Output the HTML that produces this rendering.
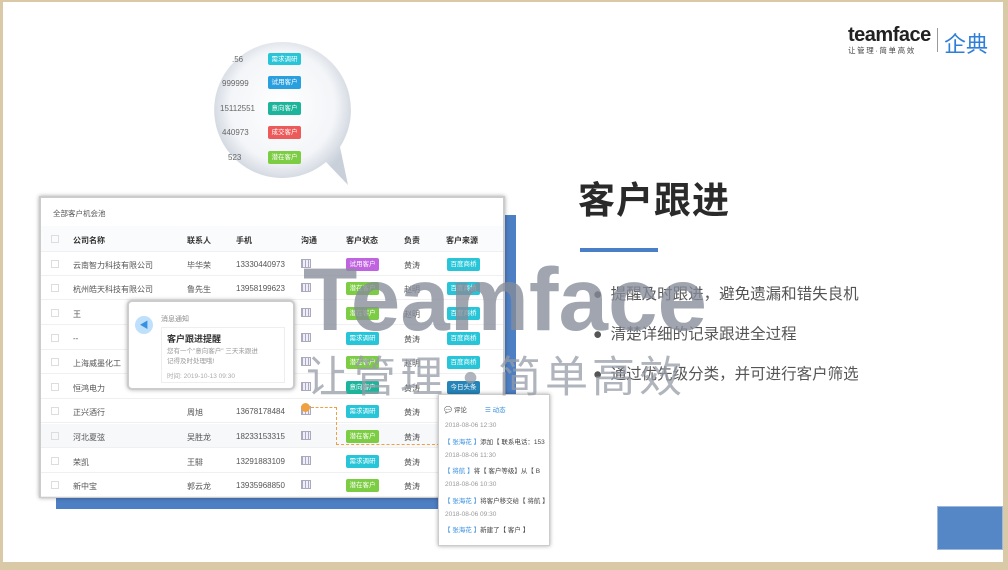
<!DOCTYPE html>
<html><head><meta charset="utf-8"><style>
*{margin:0;padding:0;box-sizing:border-box}
body{width:1008px;height:570px;background:#d9c9a6;position:relative;overflow:hidden;font-family:"Liberation Sans","Noto Sans CJK SC",sans-serif}
#pg{position:absolute;left:3px;top:2px;width:1000px;height:560px;background:#fff;overflow:hidden}
.abs{position:absolute}
.tb{position:absolute;left:36px;top:194px;width:466px;height:302px;background:#fff;border:2px solid #ccc;box-shadow:0 0 4px rgba(0,0,0,.35)}
.row{position:absolute;left:0;width:462px;height:24px;border-bottom:1px solid #f0f0f0;font-size:8px;color:#555}
.row span{position:absolute;top:8px;white-space:nowrap}
.tag{position:absolute;top:6px;width:33px;height:13px;border-radius:2px;color:#fff;font-size:6.5px;line-height:13px;text-align:center}
.cb{position:absolute;left:10px;top:8px;width:8px;height:8px;border:1px solid #ddd}
.gi{position:absolute;left:260px;top:7px;width:10px;height:9px;border:1px solid #aab;background:repeating-linear-gradient(90deg,#aab 0 1px,#eef 1px 3px)}
.pu{background:#c063e0}.gr{background:#7ccd43}.cy{background:#28c5d8}.tl{background:#1cb49a}.db{background:#2685b8}
</style></head><body><div id="pg">
<div class="abs" style="left:845px;top:22px;font-size:20px;font-weight:bold;color:#222;letter-spacing:-0.5px">teamface</div>
<div class="abs" style="left:845px;top:43px;font-size:7.5px;color:#444;letter-spacing:1.6px">让管理·简单高效</div>
<div class="abs" style="left:934px;top:26px;width:1px;height:24px;background:#999"></div>
<div class="abs" style="left:941px;top:25px;font-size:22px;color:#2f7fd8">企典</div>

<svg class="abs" style="left:205px;top:35px" width="150" height="150">
<defs><radialGradient id="rg" cx="50%" cy="45%" r="55%"><stop offset="0" stop-color="#fff"/><stop offset=".7" stop-color="#f3f5f8"/><stop offset="1" stop-color="#c9d0da"/></radialGradient></defs>
<path d="M75 5 A68 68 0 1 0 118 125 L140 148 L132 110 A68 68 0 0 0 75 5Z" fill="url(#rg)"/>
</svg>
<div class="abs" style="left:213px;top:48px;width:130px;font-size:8px;color:#666">
<div class="abs" style="left:16px;top:5px">.56</div><div class="abs tag cy" style="left:52px;top:3px;height:12px">需求调研</div>
<div class="abs" style="left:6px;top:29px">999999</div><div class="abs tag" style="left:52px;top:26px;background:#2a9fe0">试用客户</div>
<div class="abs" style="left:4px;top:54px">15112551</div><div class="abs tag tl" style="left:52px;top:52px">意向客户</div>
<div class="abs" style="left:6px;top:78px">440973</div><div class="abs tag" style="left:52px;top:76px;background:#ec5a5a">成交客户</div>
<div class="abs" style="left:12px;top:103px">523</div><div class="abs tag gr" style="left:52px;top:101px">潜在客户</div>
</div>

<div class="abs" style="left:53px;top:213px;width:460px;height:294px;background:#4d7fc4"></div>
<div class="tb">
<div class="abs" style="left:12px;top:10px;font-size:7.5px;color:#555">全部客户机会池</div>
<div class="row" style="top:28px;height:26px;background:#fafbfc;font-weight:bold;color:#333"><div class="cb" style="top:9px"></div><span style="left:32px;top:9px">公司名称</span><span style="left:146px;top:9px">联系人</span><span style="left:195px;top:9px">手机</span><span style="left:260px;top:9px">沟通</span><span style="left:305px;top:9px">客户状态</span><span style="left:363px;top:9px">负责</span><span style="left:405px;top:9px">客户来源</span></div>
<div class="row" style="top:54px"><div class="cb"></div><span style="left:32px">云南智力科技有限公司</span><span style="left:146px">毕华荣</span><span style="left:195px">13330440973</span><div class="gi"></div><div class="tag pu" style="left:305px">试用客户</div><span style="left:363px">黄涛</span><div class="tag cy" style="left:406px">百度商桥</div></div>
<div class="row" style="top:78px"><div class="cb"></div><span style="left:32px">杭州皓天科技有限公司</span><span style="left:146px">鲁先生</span><span style="left:195px">13958199623</span><div class="gi"></div><div class="tag gr" style="left:305px">潜在客户</div><span style="left:363px">赵明</span><div class="tag cy" style="left:406px">百度商桥</div></div>
<div class="row" style="top:103px"><div class="cb"></div><span style="left:32px">王</span><div class="gi"></div><div class="tag gr" style="left:305px">潜在客户</div><span style="left:363px">赵明</span><div class="tag cy" style="left:406px">百度商桥</div></div>
<div class="row" style="top:128px"><div class="cb"></div><span style="left:32px">--</span><div class="gi"></div><div class="tag cy" style="left:305px">需求调研</div><span style="left:363px">黄涛</span><div class="tag cy" style="left:406px">百度商桥</div></div>
<div class="row" style="top:152px"><div class="cb"></div><span style="left:32px">上海威墨化工</span><div class="gi"></div><div class="tag gr" style="left:305px">潜在客户</div><span style="left:363px">赵明</span><div class="tag cy" style="left:406px">百度商桥</div></div>
<div class="row" style="top:177px"><div class="cb"></div><span style="left:32px">恒鸿电力</span><div class="gi"></div><div class="tag tl" style="left:305px">意向客户</div><span style="left:363px">黄涛</span><div class="tag db" style="left:406px">今日头条</div></div>
<div class="row" style="top:201px"><div class="cb"></div><span style="left:32px">正兴酒行</span><span style="left:146px">周旭</span><span style="left:195px">13678178484</span><div class="gi"></div><div class="tag cy" style="left:305px">需求调研</div><span style="left:363px">黄涛</span></div>
<div class="row" style="top:226px;background:#f7f8fa"><div class="cb"></div><span style="left:32px">河北夏弦</span><span style="left:146px">吴胜龙</span><span style="left:195px">18233153315</span><div class="gi"></div><div class="tag gr" style="left:305px">潜在客户</div><span style="left:363px">黄涛</span></div>
<div class="row" style="top:251px"><div class="cb"></div><span style="left:32px">荣凯</span><span style="left:146px">王騑</span><span style="left:195px">13291883109</span><div class="gi"></div><div class="tag cy" style="left:305px">需求调研</div><span style="left:363px">黄涛</span></div>
<div class="row" style="top:275px"><div class="cb"></div><span style="left:32px">新中宝</span><span style="left:146px">郭云龙</span><span style="left:195px">13935968850</span><div class="gi"></div><div class="tag gr" style="left:305px">潜在客户</div><span style="left:363px">黄涛</span></div>
</div>
<div class="abs" style="left:298px;top:401px;width:9px;height:9px;border-radius:50%;background:#f0a040"></div>
<div class="abs" style="left:308px;top:405px;width:26px;border-top:1.5px dashed #f0a040"></div>
<div class="abs" style="left:333px;top:405px;height:38px;border-left:1.5px dashed #f0a040"></div>
<div class="abs" style="left:333px;top:442px;width:104px;border-top:1.5px dashed #f0a040"></div>

<div class="abs" style="left:124px;top:298px;width:168px;height:90px;background:#fff;border:2px solid #ccc;border-radius:5px;box-shadow:0 0 4px rgba(0,0,0,.3)">
<div class="abs" style="left:6px;top:14px;width:18px;height:18px;border-radius:50%;background:#bfe0fb;color:#3a90e0;font-size:9px;text-align:center;line-height:18px">◀</div>
<div class="abs" style="left:32px;top:12px;font-size:7px;color:#888">消息通知</div>
<div class="abs" style="left:32px;top:25px;width:124px;height:56px;border:1px solid #eee">
<div class="abs" style="left:5px;top:4px;font-size:9px;color:#333;font-weight:bold">客户跟进提醒</div>
<div class="abs" style="left:5px;top:19px;font-size:6.5px;color:#999;line-height:10px;width:120px">您有一个"意向客户" 三天未跟进<br>记得及时处理哦!</div>
<div class="abs" style="left:5px;top:42px;font-size:6.5px;color:#aaa">时间: 2019-10-13 09:30</div>
</div></div>

<div class="abs" style="left:435px;top:392px;width:112px;height:152px;background:#fff;border:1px solid #ccc;box-shadow:0 0 4px rgba(0,0,0,.35);font-size:6.5px;color:#444;overflow:hidden;white-space:nowrap">
<div class="abs" style="left:5px;top:9px">💬 评论</div><div class="abs" style="left:46px;top:9px;color:#3a90e0">☰ 动态</div>
<div class="abs" style="left:6px;top:27px;color:#999">2018-08-06 12:30</div><div class="abs" style="left:5px;top:41px"><b style="color:#3a90e0;font-weight:normal">【 张海花 】</b>添加【 联系电话：153</div>
<div class="abs" style="left:6px;top:57px;color:#999">2018-08-06 11:30</div><div class="abs" style="left:5px;top:70px"><b style="color:#3a90e0;font-weight:normal">【 将航 】</b>将【 客户等级】从【 B</div>
<div class="abs" style="left:6px;top:86px;color:#999">2018-08-06 10:30</div><div class="abs" style="left:5px;top:100px"><b style="color:#3a90e0;font-weight:normal">【 张海花 】</b>将客户移交给【 将航 】</div>
<div class="abs" style="left:6px;top:116px;color:#999">2018-08-06 09:30</div><div class="abs" style="left:5px;top:129px"><b style="color:#3a90e0;font-weight:normal">【 张海花 】</b>新建了【 客户 】</div>
</div>

<div class="abs" style="left:575px;top:168px;font-size:37px;font-weight:bold;color:#2a2a2a;letter-spacing:1px">客户跟进</div>
<div class="abs" style="left:577px;top:246px;width:78px;height:4px;background:#4a7fc8"></div>
<div class="abs" style="left:590px;top:273px;font-size:15.5px;color:#555;line-height:40px">
<div>● <span style="margin-left:4px">提醒及时跟进，避免遗漏和错失良机</span></div>
<div>● <span style="margin-left:4px">清楚详细的记录跟进全过程</span></div>
<div>● <span style="margin-left:4px">通过优先级分类，并可进行客户筛选</span></div>
</div>

<div class="abs" style="left:300px;top:247px;font-size:89px;font-weight:bold;color:rgba(135,140,152,.78);line-height:100px">Teamface</div>
<div class="abs" style="left:303px;top:341px;font-size:43px;color:rgba(150,155,165,.75);letter-spacing:4px;white-space:nowrap">让管理 • 简单高效</div>

<div class="abs" style="left:934px;top:504px;width:66px;height:44px;background:#5586c6;border:1px solid #9bb8dd"></div>
</div></body></html>
